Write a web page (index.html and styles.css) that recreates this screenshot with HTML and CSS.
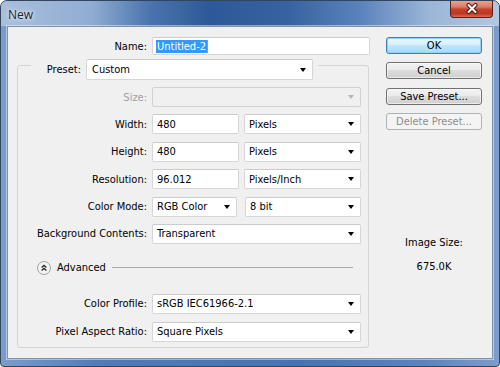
FILE: index.html
```html
<!DOCTYPE html>
<html lang="en">
<head>
    <meta charset="utf-8" />
    <link rel="stylesheet" href="styles.css">
</head>
<body>
    <div class="window">
        <div class="titlebar">
            <span class="title">New</span>
            <div class="close-btn">
                <svg width="14" height="11" viewBox="0 0 14 11">
                    <path d="M3.5 2 L10.5 9 M10.5 2 L3.5 9" stroke="#4a1a14" stroke-width="4" stroke-linecap="round" />
                    <path d="M3.5 2 L10.5 9 M10.5 2 L3.5 9" stroke="#ffffff" stroke-width="2" stroke-linecap="round" />
                </svg>
            </div>
        </div>
        <div class="client">
            <div class="main">
                <div class="name-row">
                    <label>Name:</label>
                    <div class="field"><span class="selected">Untitled-2</span></div>
                </div>

                <div class="group">
                    <div class="legend">
                        <label>Preset:</label>
                        <div class="field select preset-select">Custom<i class="arrow"></i></div>
                    </div>

                    <div class="rows top-rows">
                        <div class="row disabled">
                            <label>Size:</label>
                            <div class="field select"><i class="arrow"></i></div>
                        </div>
                        <div class="row">
                            <label>Width:</label>
                            <div class="pair">
                                <div class="field">480</div>
                                <div class="field select">Pixels<i class="arrow"></i></div>
                            </div>
                        </div>
                        <div class="row">
                            <label>Height:</label>
                            <div class="pair">
                                <div class="field">480</div>
                                <div class="field select">Pixels<i class="arrow"></i></div>
                            </div>
                        </div>
                        <div class="row">
                            <label>Resolution:</label>
                            <div class="pair">
                                <div class="field">96.012</div>
                                <div class="field select">Pixels/Inch<i class="arrow"></i></div>
                            </div>
                        </div>
                        <div class="row">
                            <label>Color Mode:</label>
                            <div class="pair mode-pair">
                                <div class="field select">RGB Color<i class="arrow"></i></div>
                                <div class="field select">8 bit<i class="arrow"></i></div>
                            </div>
                        </div>
                        <div class="row">
                            <label>Background Contents:</label>
                            <div class="field select">Transparent<i class="arrow"></i></div>
                        </div>
                    </div>

                    <div class="advanced">
                        <span class="toggle">
                            <svg width="14" height="14" viewBox="0 0 14 14">
                                <circle cx="7" cy="7" r="6.5" fill="#f4f4f4" stroke="#a3a3a3" />
                                <path d="M4.6 6.6 L7 4.4 L9.4 6.6 M4.6 9.6 L7 7.4 L9.4 9.6" fill="none" stroke="#2a2a2a" stroke-width="1.3" />
                            </svg>
                        </span>
                        <span class="advanced-text">Advanced</span>
                        <span class="rule"></span>
                    </div>

                    <div class="rows bottom-rows">
                        <div class="row">
                            <label>Color Profile:</label>
                            <div class="field select">sRGB IEC61966-2.1<i class="arrow"></i></div>
                        </div>
                        <div class="row">
                            <label>Pixel Aspect Ratio:</label>
                            <div class="field select">Square Pixels<i class="arrow"></i></div>
                        </div>
                    </div>
                </div>
            </div>

            <div class="side">
                <button class="btn default-btn">OK</button>
                <button class="btn">Cancel</button>
                <button class="btn">Save Preset...</button>
                <button class="btn" disabled>Delete Preset...</button>
                <div class="image-size">
                    <div>Image Size:</div>
                    <div class="size-value">675.0K</div>
                </div>
            </div>
        </div>
    </div>
</body>
</html>
```

FILE: styles.css
```css
:root {
    --dialog-bg: #f0f0f0;
    --font-family: 'DejaVu Sans Condensed', 'DejaVu Sans', sans-serif;
    --font-color: #000;
    --field-border: #d6d6d6;
    --group-border: #d0d5d9;
}

body {
    margin: 0;
    background: #fff;
    font-family: var(--font-family);
    font-size: 11px;
    color: var(--font-color);
}

.window {
    width: 500px;
    height: 367px;
    box-sizing: border-box;
    border: 1px solid #34445a;
    border-radius: 7px 7px 4px 4px;
    background: linear-gradient(90deg, #7b9dcb 0%, #4f7bb8 20%, #4573b3 60%, #5a84bf 85%, #7d9ecb 100%);
    display: flex;
    flex-direction: column;
    overflow: hidden;
}

.titlebar {
    height: 25px;
    flex: none;
    display: flex;
    justify-content: space-between;
    align-items: flex-start;
    padding-left: 7px;
    background: linear-gradient(90deg, #a9bfdc 0%, #91add2 18%, #4a74ad 30%, #2c5997 42%, #3863a1 58%, #5a83bb 72%, #9bb6d8 86%, #b2c7e1 100%);
}

.title {
    margin-top: 5px;
    font-family: 'Open Sans', sans-serif;
    font-size: 12px;
    color: #1a2230;
    text-shadow: 0 0 6px rgba(255, 255, 255, 0.9), 0 0 3px rgba(255, 255, 255, 0.8);
}

.close-btn {
    width: 41px;
    height: 17px;
    margin-right: 6px;
    margin-top: -1px;
    border: 1px solid #5b1f18;
    border-top: none;
    border-radius: 0 0 4px 4px;
    background: linear-gradient(180deg, #eaa899 0%, #d87d6a 40%, #c7422c 55%, #bb3721 80%, #dc6c50 100%);
    display: flex;
    justify-content: center;
    align-items: center;
}

.client {
    flex: 1;
    margin: 0 6px 7px;
    background: var(--dialog-bg);
    border: 1px solid #7e92ad;
    box-shadow: 0 0 0 1px rgba(255, 255, 255, 0.45);
    display: flex;
    padding-top: 10px;
}

.main {
    width: 353px;
    padding-left: 9px;
}

label {
    text-align: right;
    white-space: nowrap;
}

.name-row {
    display: grid;
    grid-template-columns: 130px 218px;
    column-gap: 5px;
    align-items: center;
    height: 18px;
}

.field {
    box-sizing: border-box;
    height: 20px;
    background: #fff;
    border: 1px solid var(--field-border);
    border-top-color: #cbcbcb;
    border-radius: 2px;
    padding: 0 6px 0 4px;
    display: flex;
    align-items: center;
    white-space: nowrap;
    overflow: hidden;
}

.name-row .field {
    height: 18px;
    padding-left: 3px;
}

.selected {
    background: #3399ff;
    color: #fff;
    padding: 0 1px;
    line-height: 13px;
    border-right: 1px solid #d68a3e;
}

.select {
    justify-content: space-between;
}

.arrow {
    width: 0;
    height: 0;
    border-left: 3.5px solid transparent;
    border-right: 3.5px solid transparent;
    border-top: 4px solid #000;
    margin-left: auto;
}

.group {
    margin-top: 10px;
    width: 352px;
    box-sizing: border-box;
    border: 1px solid var(--group-border);
    border-radius: 3px;
    padding-bottom: 5px;
}

.legend {
    margin: -7px 0 0 13px;
    width: 287px;
    display: flex;
    align-items: center;
    background: var(--dialog-bg);
}

.legend label {
    width: 50px;
}

.preset-select {
    width: 227px;
    margin-left: 5px;
    height: 21px;
    padding-left: 5px;
}

.rows {
    display: flex;
    flex-direction: column;
    gap: 7.4px;
}

.top-rows {
    margin-top: 7px;
}

.bottom-rows {
    margin-top: 19px;
    gap: 8px;
}

.row {
    display: grid;
    grid-template-columns: 129px 209px;
    column-gap: 5px;
    align-items: center;
}

.pair {
    display: grid;
    grid-template-columns: 87px 117px;
    column-gap: 5px;
}

.mode-pair {
    grid-template-columns: 85px 116px;
    column-gap: 8px;
}

.disabled label {
    color: #a0a0a0;
}

.disabled .field {
    background: #f0f0f0;
    border-color: #d2d2d2;
}

.disabled .arrow {
    border-top-color: #b5b5b5;
}

.advanced {
    margin-top: 17px;
    height: 14px;
    display: flex;
    align-items: center;
    padding: 0 15px 0 19px;
}

.toggle {
    display: flex;
}

.advanced-text {
    margin-left: 6px;
    font-size: 11px;
}

.rule {
    flex: 1;
    height: 1px;
    margin-left: 6px;
    background: #a9a9a9;
}

.side {
    width: 96px;
    margin-left: 16px;
    display: flex;
    flex-direction: column;
    gap: 8.3px;
}

.btn {
    height: 17px;
    padding: 0;
    font-family: var(--font-family);
    font-size: 11px;
    color: #000;
    border: 1px solid #707070;
    border-radius: 3px;
    background: linear-gradient(180deg, #f2f2f2 0%, #ebebeb 45%, #dddddd 50%, #cfcfcf 100%);
    box-shadow: inset 0 0 0 1px rgba(255, 255, 255, 0.6);
}

.default-btn {
    border-color: #3c7fb1;
    background: linear-gradient(180deg, #eaf6fd 0%, #d9f0fc 45%, #bee6fd 50%, #a7d9f5 100%);
    box-shadow: inset 0 0 0 1px #98d1ef;
}

.btn:disabled {
    color: #8d8d8d;
    border-color: #adb2b5;
    background: #f4f4f4;
    box-shadow: none;
}

.image-size {
    margin-top: 98px;
    text-align: center;
    line-height: 13px;
}

.size-value {
    margin-top: 11px;
}
```
